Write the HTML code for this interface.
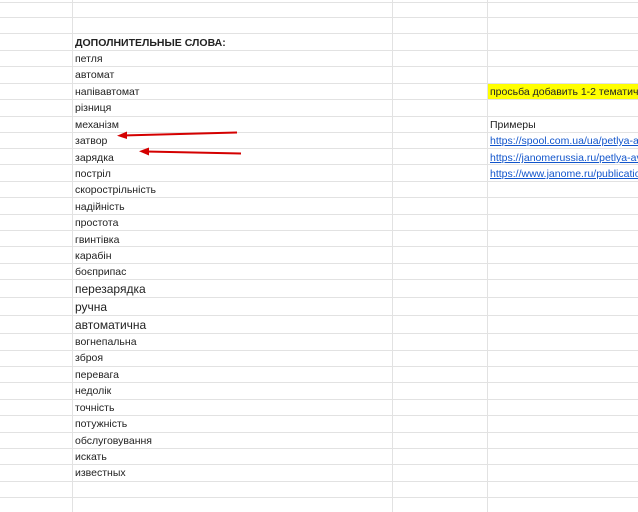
<!DOCTYPE html>
<html><head><meta charset="utf-8"><style>
body{margin:0;width:638px;height:512px;overflow:hidden;background:#fff;font-family:"Liberation Sans",Arial,sans-serif;position:relative}
.h{position:absolute;left:0;width:638px;height:1px;background:#e2e2e2}
.v{position:absolute;top:0;width:1px;height:512px;background:#e2e2e2}
.t{position:absolute;left:75px;font-size:10.5px;color:#222;white-space:nowrap}
.b{font-size:12px}
.r{position:absolute;left:490px;width:148px;overflow:hidden;font-size:10.5px;color:#222;white-space:nowrap}
a{color:#1155cc;text-decoration:underline}
#tx{position:absolute;left:0;top:1px;width:638px;height:511px}
</style></head><body>
<div style="position:absolute;left:488px;top:83px;width:150px;height:16px;background:#ffff00"></div>
<div id="g"></div>
<div class="v" style="left:72px"></div>
<div class="v" style="left:392px"></div>
<div class="v" style="left:487px"></div>
<script>
var ys=[1.7,17.3,33.3,50,66,82.7,99,115.7,132,148.3,164.3,181,197,213.5,230,246,262.7,279.3,297.3,315,333.3,349.5,366,382,398.7,415,431.7,448,464.3,481,497];
var h='';ys.forEach(function(y){h+='<div class="h" style="top:'+Math.round(y)+'px"></div>'});
document.getElementById('g').innerHTML=h;
</script>
<div id="tx">
<div class="t" style="top:36px;font-weight:bold">ДОПОЛНИТЕЛЬНЫЕ СЛОВА:</div>
<div class="t" style="top:52px">петля</div>
<div class="t" style="top:68px">автомат</div>
<div class="t" style="top:85px">напівавтомат</div>
<div class="t" style="top:101px">різниця</div>
<div class="t" style="top:118px">механізм</div>
<div class="t" style="top:134px">затвор</div>
<div class="t" style="top:151px">зарядка</div>
<div class="t" style="top:167px">постріл</div>
<div class="t" style="top:183px">скорострільність</div>
<div class="t" style="top:200px">надійність</div>
<div class="t" style="top:216px">простота</div>
<div class="t" style="top:233px">гвинтівка</div>
<div class="t" style="top:249px">карабін</div>
<div class="t" style="top:265px">боєприпас</div>
<div class="t b" style="top:281px">перезарядка</div>
<div class="t b" style="top:299px">ручна</div>
<div class="t b" style="top:317px">автоматична</div>
<div class="t" style="top:335px">вогнепальна</div>
<div class="t" style="top:351px">зброя</div>
<div class="t" style="top:368px">перевага</div>
<div class="t" style="top:384px">недолік</div>
<div class="t" style="top:401px">точність</div>
<div class="t" style="top:417px">потужність</div>
<div class="t" style="top:434px">обслуговування</div>
<div class="t" style="top:450px">искать</div>
<div class="t" style="top:466px">известных</div>
<div class="r" style="top:85px">просьба добавить 1-2 тематических</div>
<div class="r" style="top:118px">Примеры</div>
<div class="r" style="top:134px"><a>https://spool.com.ua/ua/petlya-avtomat</a></div>
<div class="r" style="top:151px"><a>https://janomerussia.ru/petlya-avtomat</a></div>
<div class="r" style="top:167px"><a>https://www.janome.ru/publications</a></div>
</div>
<svg style="position:absolute;left:0;top:0" width="638" height="512">
<g stroke="#d40000" stroke-width="2" fill="#d40000">
<line x1="237" y1="132.5" x2="124" y2="135.5"/>
<polygon points="117,135.7 127,131.5 127,139" stroke="none"/>
<line x1="241" y1="153.5" x2="146" y2="151.5"/>
<polygon points="139,151.3 149,147.5 149,155.5" stroke="none"/>
</g></svg>
</body></html>
